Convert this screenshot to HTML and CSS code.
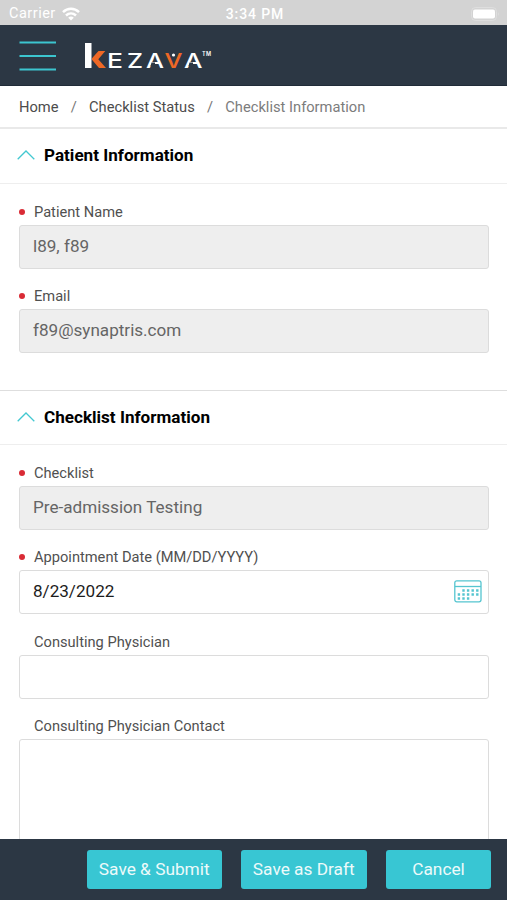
FILE: index.html
```html
<!DOCTYPE html>
<html lang="en">
<head>
<meta charset="utf-8">
<meta name="viewport" content="width=device-width, initial-scale=1">
<title>Checklist Information</title>
<link rel="stylesheet" href="styles.css">
</head>
<body>
<div class="app">
  <div class="status">
    <div class="carrier"><span>Carrier</span>
      <svg width="18" height="14" viewBox="0 0 18 14" fill="none" stroke="#fff" stroke-width="2.5"><path d="M1 5.1C5.6.7 12.4.7 17 5.1"/><path d="M4 8.500c3-2.800 7-2.800 10 0"/><path d="M6.200 10.700c1.700-1.500 3.900-1.500 5.600 0L9 13.500z" fill="#fff" stroke="none"/></svg>
    </div>
    <span class="time">3:34 PM</span>
    <svg class="battery" width="29" height="14" viewBox="0 0 29 14"><rect x=".5" y=".5" width="25" height="13" rx="4" fill="none" stroke="#dedede"/><rect x="2" y="2.500" width="22" height="9" rx="2" fill="#fff"/><path d="M27 5v4q1.500-2 0-4" fill="#e0e0e0"/></svg>
  </div>
  <header class="header">
    <svg class="menu" width="38" height="32" viewBox="0 0 38 32" stroke="#3cc5cf" stroke-width="2.200"><path d="M.5 2.500h36.500M.5 16h36.500M.5 29.500h36.500"/></svg>
    <svg class="logo" width="130" height="40" viewBox="0 -5 130 40">
      <path d="M0 2h6.500v25H0z" fill="#fff"/>
      <path d="M13.500 10h6.800l-7 8.300 7.700 8.700h-7l-7-8.200v-1.500z" fill="#ee6826"/>
      <g class="word" fill="#fff">
        <text x="22" y="26.700" textLength="16" lengthAdjust="spacingAndGlyphs">E</text>
        <text x="42" y="26.700" textLength="16" lengthAdjust="spacingAndGlyphs">Z</text>
        <text x="61" y="26.700" textLength="18" lengthAdjust="spacingAndGlyphs">A</text>
        <text x="79.500" y="26.700" textLength="18" lengthAdjust="spacingAndGlyphs" fill="#ee6826">V</text>
        <text x="99" y="26.700" textLength="18.500" lengthAdjust="spacingAndGlyphs">A</text>
      </g>
      <path d="M66.500 21.500h3.500v3.500h-4.500zM104.500 21.500h3.500v3.500h-4.500z" fill="#2c3744"/>
      <circle cx="88.500" cy="14" r="1.600" fill="#fff"/>
      <text class="tm" x="117" y="15" textLength="9" fill="#fff">TM</text>
    </svg>
  </header>
  <nav class="crumbs"><a>Home</a><i>/</i><a>Checklist Status</a><i>/</i><span>Checklist Information</span></nav>
  <main class="main">
    <section class="section patient">
      <h2><svg width="18" height="10" viewBox="0 0 18 10" fill="none" stroke="#43c8d1" stroke-width="1.300"><path d="M.7 9.300 9 1l8.300 8.300"/></svg><span>Patient Information</span></h2>
      <div class="field"><label class="req">Patient Name</label><div class="input disabled"><span>l89, f89</span></div></div>
      <div class="field"><label class="req">Email</label><div class="input disabled"><span>f89@synaptris.com</span></div></div>
    </section>
    <section class="section">
      <h2><svg width="18" height="10" viewBox="0 0 18 10" fill="none" stroke="#43c8d1" stroke-width="1.300"><path d="M.7 9.300 9 1l8.300 8.300"/></svg><span>Checklist Information</span></h2>
      <div class="field"><label class="req">Checklist</label><div class="input disabled"><span>Pre-admission Testing</span></div></div>
      <div class="field"><label class="req">Appointment Date (MM/DD/YYYY)</label><div class="input date"><span>8/23/2022</span>
        <svg class="cal" width="28" height="23" viewBox="0 0 28 23" fill="none" stroke="#55c5d0" stroke-width="1.300"><rect x=".8" y=".8" width="26.200" height="21" rx="2"/><path d="M1 6.500h26"/><path d="M8.300 10.500h16.600M3.700 14.500h21.200M3.700 18.500h12" stroke-width="2.300" stroke-dasharray="2.400 2.200"/></svg></div></div>
      <div class="field"><label>Consulting Physician</label><div class="input"></div></div>
      <div class="field"><label>Consulting Physician Contact</label><div class="input area"></div></div>
    </section>
  </main>
  <footer class="footer"><button class="submit">Save &amp; Submit</button><button class="draft">Save as Draft</button><button class="cancel">Cancel</button></footer>
</div>
</body>
</html>
```

FILE: styles.css
```css
* { box-sizing: border-box; }
body { margin: 0; font-family: Roboto, "Liberation Sans", sans-serif; background: #fff; }
.app { height: 900px; display: flex; flex-direction: column; overflow: hidden; }
.status { flex: none; height: 25px; background: #d3d3d3; color: #fff; display: grid; grid-template-columns: 1fr auto 1fr; align-items: center; padding: 3px 7px 0 9px; font-size: 14.5px; line-height: 20px; }
.carrier { display: flex; align-items: center; gap: 6px; letter-spacing: .5px; }
.time { font-weight: 500; font-size: 14px; letter-spacing: .9px; padding-left: 1px; }
.battery { justify-self: end; }
.header { flex: none; height: 61px; background: #2c3744; display: flex; align-items: center; padding: 1px 0 0 19px; border-bottom: 1px solid #202b38; }
.logo { margin-left: 28px; overflow: visible; }
.word { font: 500 20.500px Inter, sans-serif; }
.tm { font: 600 5.500px Inter, sans-serif; }
.crumbs { flex: none; height: 43px; display: flex; align-items: center; padding: 1px 0 0 19px; border-bottom: 2px solid #e9e9e9; color: #4c4c4c; font-size: 14.7px; }
.crumbs i { font-style: normal; width: 30.5px; text-align: center; color: #777; }
.crumbs span { color: #7c7c7c; }
.main { flex: 1; min-height: 0; overflow: hidden; }
.patient { height: 262px; border-bottom: 1px solid #dedede; }
h2 { margin: 0 0 19px; height: 55px; display: flex; align-items: center; gap: 9px; padding: 0 0 2px 17px; border-bottom: 1px solid #eee; font-size: 17.1px; font-weight: 700; color: #000; }
.section:not(.patient) h2 { height: 54px; }
.field { padding: 0 18px 0 19px; height: 84.3px; }
label { display: flex; align-items: center; height: 22px; padding: 0 0 4px 15px; color: #505050; font-size: 14.650px; position: relative; }
.req::before { content: ""; position: absolute; left: 0; top: 6px; width: 6px; height: 6px; border-radius: 50%; background: #d92b35; }
.input { height: 44px; border: 1px solid #dcdcdc; border-radius: 3px; display: flex; align-items: center; justify-content: space-between; padding: 0 6px 3px 13px; font-size: 17.100px; color: #1c1c1c; background: #fff; }
.cal { margin-top: 2px; }
.disabled { background: #eee; color: #656565; }
.area { height: 130px; }
.footer { flex: none; height: 61px; background: #2c3744; display: flex; align-items: flex-start; justify-content: flex-end; padding: 11px 16px 0 0; gap: 19.5px; }
button { border: 0; border-radius: 3px; height: 39px; padding: 0 0 2px; background: #38c6d3; color: #edfafa; font: 400 17.300px Roboto, sans-serif; }
.submit { width: 134.500px; }
.draft { width: 125.500px; }
.cancel { width: 105px; }
```
